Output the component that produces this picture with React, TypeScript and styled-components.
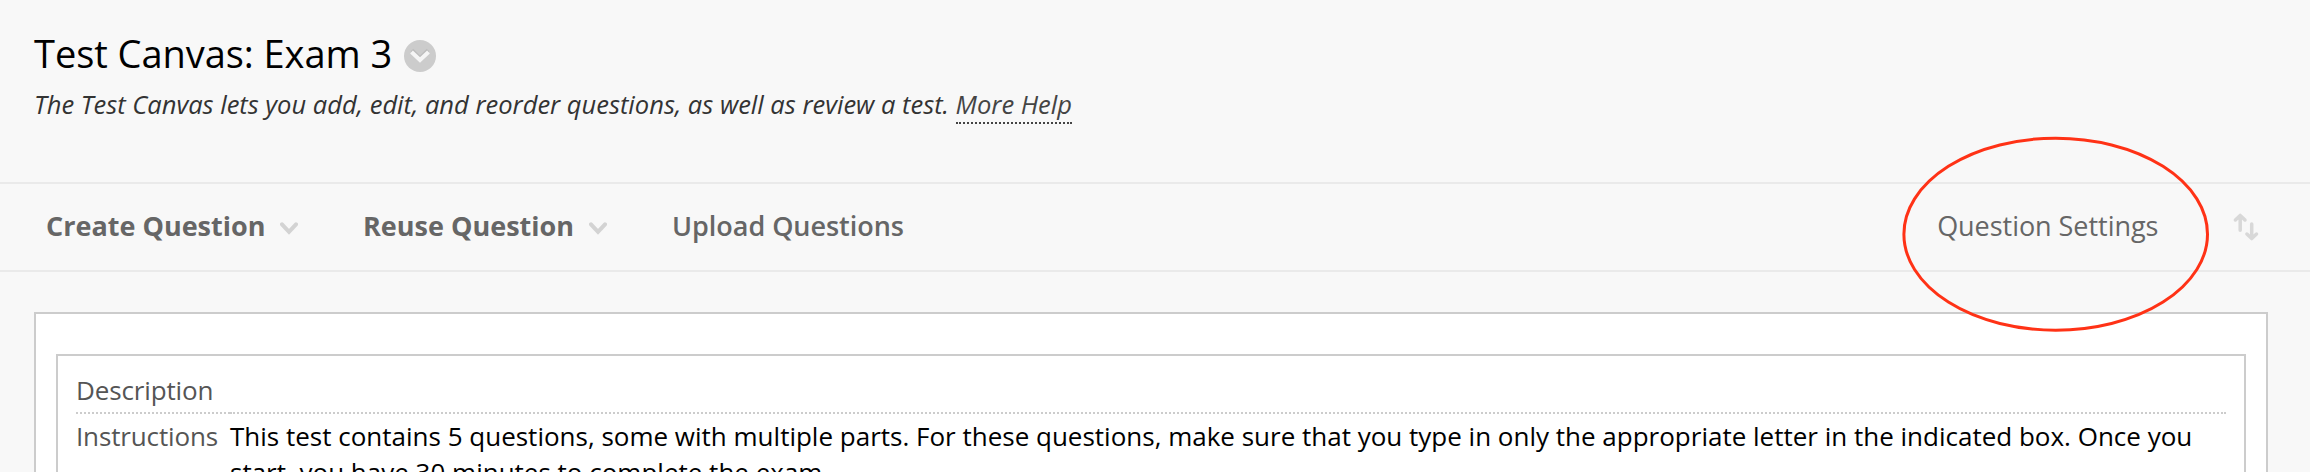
import React from 'react';
import styled, { createGlobalStyle } from 'styled-components';

const Global = createGlobalStyle`
  body { margin: 0; background: #f8f8f8; overflow: hidden; font-family: "Open Sans", sans-serif; }
`;
const Page = styled.main`
  position: relative;
  height: 472px;
  overflow: hidden;
  background: #f8f8f8;
`;
const Header = styled.header`
  height: 182px;
  box-sizing: border-box;
  padding: 27px 34px 0;
`;
const TitleRow = styled.div`
  display: flex;
  align-items: center;
  gap: 12px;
  height: 52px;
`;
const Title = styled.h1`
  margin: 0;
  font-size: 38px;
  line-height: 52px;
  font-weight: 400;
  letter-spacing: -0.05px;
  color: #000;
  white-space: nowrap;
`;
const MenuBadge = styled.svg`
  margin-top: 6px;
`;
const Intro = styled.p`
  margin: 8px 0 0;
  font-size: 25.52px;
  line-height: 34px;
  font-style: italic;
  color: #333;
  white-space: nowrap;
`;
const Help = styled.a`
  display: inline-block;
  padding-bottom: 1px;
  border-bottom: 2px dotted #444;
  color: #444;
`;
const Bar = styled.nav`
  height: 90px;
  box-sizing: border-box;
  border-top: 2px solid #eaeaea;
  border-bottom: 2px solid #eaeaea;
  display: flex;
  align-items: center;
  padding: 0 50px 3px 46px;
`;
const Action = styled.button<{ $weight: number; $gap: number }>`
  border: 0;
  padding: 0;
  background: none;
  display: flex;
  align-items: center;
  gap: 14.6px;
  font: ${p => p.$weight} 27px/40px "Open Sans", sans-serif;
  letter-spacing: ${p => (p.$weight === 700 ? '0' : '-0.04px')};
  color: #666;
  margin-right: ${p => p.$gap}px;
  white-space: nowrap;
`;
const ChevronIcon = styled.svg`
  margin-top: 5px;
`;
const Right = styled.div`
  margin-left: auto;
  display: flex;
  align-items: center;
`;
const SortIcon = styled.svg`
  margin-top: 3px;
`;
const Panel = styled.section`
  margin: 40px 42px 0 34px;
  border: 2px solid #ccc;
  background: #fff;
  padding: 40px 20px 0;
  height: 300px;
`;
const Details = styled.dl`
  margin: 0;
  border: 2px solid #ccc;
  height: 300px;
  padding: 12px 18px 0;
`;
const Row = styled.div`
  display: flex;
  font-size: 26px;
  line-height: 36px;
`;
const Label = styled.dt`
  width: 154px;
  box-sizing: border-box;
  padding: 4px 0;
  border-bottom: 2px dotted #ccc;
  letter-spacing: -0.14px;
  color: #555;
`;
const Text = styled.dd`
  flex: 1;
  margin: 0;
  padding: 4px 0;
  border-bottom: 2px dotted #ccc;
  color: #000;
  white-space: nowrap;
`;
const Ring = styled.svg`
  position: absolute;
  left: 1900px;
  top: 134px;
  pointer-events: none;
`;

const Chevron = () => (
  <ChevronIcon width="18" height="13" viewBox="0 0 18 13">
    <path d="M2 2.3l7 7.6 7-7.6" fill="none" stroke="#d3d3d3" strokeWidth="4" strokeLinecap="round" />
  </ChevronIcon>
);

export default function App() {
  return (
    <Page>
      <Global />
      <Header>
        <TitleRow>
          <Title>Test Canvas: Exam 3</Title>
          <MenuBadge width="32" height="32" viewBox="0 0 32 32">
            <circle cx="16" cy="16" r="16" fill="#ccc" />
            <path d="M8 10l8 8 8-8" fill="none" stroke="#bdbdbd" strokeWidth="3.5" />
            <path d="M7.5 12l8.5 8 8.5-8" fill="none" stroke="#f6f6f6" strokeWidth="4" />
          </MenuBadge>
        </TitleRow>
        <Intro>
          The Test Canvas lets you add, edit, and reorder questions, as well as review a test. <Help>More Help</Help>
        </Intro>
      </Header>
      <Bar>
        <Action $weight={700} $gap={65}>Create Question<Chevron /></Action>
        <Action $weight={700} $gap={65.5}>Reuse Question<Chevron /></Action>
        <Action $weight={600} $gap={0}>Upload Questions</Action>
        <Right>
          <Action $weight={400} $gap={73.6}>Question Settings</Action>
          <SortIcon width="28" height="30" viewBox="0 0 28 30" fill="none" stroke="#d8d8d8" strokeWidth="3.5" strokeLinecap="round" strokeLinejoin="round">
            <path d="M8.2 18.2V4M3.4 8L8.2 3.4 13 8" />
            <path d="M19.7 12v14M14.9 22l4.8 4.6 4.8-4.6" />
          </SortIcon>
        </Right>
      </Bar>
      <Panel>
        <Details>
          <Row><Label>Description</Label><Text /></Row>
          <Row>
            <Label>Instructions</Label>
            <Text>
              This test contains 5 questions, some with multiple parts. For these questions, make sure that you type in only the appropriate letter in the indicated box. Once you
              <br />
              start, you have 30 minutes to complete the exam.
            </Text>
          </Row>
        </Details>
      </Panel>
      <Ring width="312" height="202">
        <ellipse cx="155.7" cy="100.2" rx="151.8" ry="96" fill="none" stroke="#ff3216" strokeWidth="3" />
      </Ring>
    </Page>
  );
}
